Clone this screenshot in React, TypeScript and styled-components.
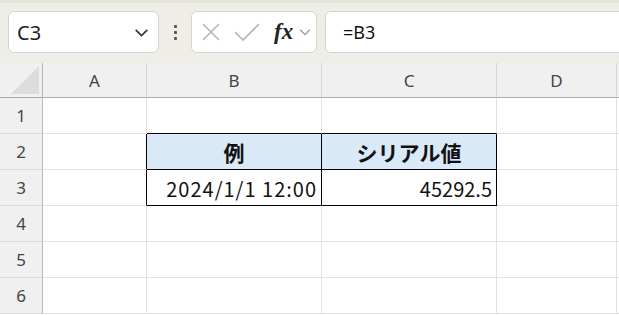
import styled, { createGlobalStyle } from "styled-components";
import { ReactElement } from "react";

const GlobalStyle = createGlobalStyle`
    html, body {
        margin: 0;
        padding: 0;
        background: #ffffff;
        overflow: hidden;
    }
    body {
        width: 619px;
        height: 315px;
        font-family: "Noto Sans", "Liberation Sans", sans-serif;
    }
`;

const COLUMNS = ["A", "B", "C", "D"];
const ROWS = [1, 2, 3, 4, 5, 6];

type CellData = {
    text?: string;
    align?: "left" | "center" | "right";
    bold?: boolean;
    fill?: string;
    right?: boolean;
    bottom?: boolean;
    wide?: boolean;
};

// B2:C3 の表 (罫線は黒)
const cellMap: Record<string, CellData> = {
    A2: { right: true },
    A3: { right: true },
    B1: { bottom: true },
    C1: { bottom: true },
    B2: { text: "例", align: "center", bold: true, fill: "#dae9f8", right: true, bottom: true },
    C2: { text: "シリアル値", align: "center", bold: true, fill: "#dae9f8", right: true, bottom: true },
    B3: { text: "2024/1/1 12:00", align: "right", right: true, bottom: true, wide: true },
    C3: { text: "45292.5", align: "right", right: true, bottom: true },
};

export default function App(): JSX.Element {
    return (
        <>
            <GlobalStyle />
            <Page>
                <Toolbar>
                    <NameBox>
                        <NameText>C3</NameText>
                        <ChevronDown size={17} color="#333" />
                    </NameBox>
                    <DotsHandle>
                        <Dot />
                        <Dot />
                        <Dot />
                    </DotsHandle>
                    <IconBox>
                        <svg width="20" height="20" viewBox="0 0 20 20">
                            <path d="M2 2 L18 18 M18 2 L2 18" stroke="#b5b5b5" strokeWidth="1.6" fill="none" />
                        </svg>
                        <svg width="26" height="20" viewBox="0 0 26 20">
                            <path d="M1 10 L9 18 L25 2" stroke="#b5b5b5" strokeWidth="1.6" fill="none" />
                        </svg>
                        <FxText>fx</FxText>
                        <ChevronDown size={14} color="#9a9a9a" />
                    </IconBox>
                    <FormulaBox>=B3</FormulaBox>
                </Toolbar>
                <Sheet>
                    <Corner>
                        <svg width="28" height="28" viewBox="0 0 28 28">
                            <polygon points="28,0 28,28 0,28" fill="#dcdcdc" />
                        </svg>
                    </Corner>
                    {COLUMNS.map((c) => (
                        <ColHeader key={c}>{c}</ColHeader>
                    ))}
                    <Filler $header />
                    {ROWS.map((r) => (
                        <RowLine key={r} row={r} />
                    ))}
                </Sheet>
            </Page>
        </>
    );
}

/*        ---------------------        COMPONENTES        ---------------------        */

interface ChevronProps {
    size: number;
    color: string;
}

const ChevronDown = ({ size, color }: ChevronProps): ReactElement => (
    <svg width={size} height={size} viewBox="0 0 16 16">
        <path d="M2.5 5.5 L8 11 L13.5 5.5" stroke={color} strokeWidth="1.5" fill="none" />
    </svg>
);

const RowLine = ({ row }: { row: number }): ReactElement => (
    <>
        <RowHeader>{row}</RowHeader>
        {COLUMNS.map((c) => {
            const d = cellMap[`${c}${row}`] ?? {};
            return (
                <Cell
                    key={c}
                    $align={d.align ?? "left"}
                    $bold={!!d.bold}
                    $fill={d.fill ?? "#ffffff"}
                    $right={!!d.right}
                    $bottom={!!d.bottom}
                    $wide={!!d.wide}
                >
                    {d.text}
                </Cell>
            );
        })}
        <Filler />
    </>
);

/*        ---------------------        ESTILOS        ---------------------        */

const Page = styled.div`
    display: flex;
    flex-direction: column;
    width: 619px;
    height: 315px;
    overflow: hidden;
`;

const Toolbar = styled.div`
    display: flex;
    align-items: flex-start;
    height: 63px;
    box-sizing: border-box;
    padding: 8px 0 0 8px;
    background: #eeeee7;
    border-top: 3px solid #e4e4dc;
`;

const WhiteBox = styled.div`
    display: flex;
    align-items: center;
    box-sizing: border-box;
    height: 42px;
    background: #ffffff;
    border: 1px solid #d6d6cf;
    border-radius: 6px;
`;

const NameBox = styled(WhiteBox)`
    width: 151px;
    padding: 0 8px 0 8px;
    justify-content: space-between;
`;

const NameText = styled.span`
    font-family: "Noto Sans", "Liberation Sans", sans-serif;
    font-size: 20px;
    color: #222;
`;

const DotsHandle = styled.div`
    display: flex;
    flex-direction: column;
    align-items: center;
    justify-content: center;
    gap: 3px;
    width: 32px;
    height: 42px;
`;

const Dot = styled.span`
    width: 3px;
    height: 3px;
    background: #555;
    border-radius: 1px;
`;

const IconBox = styled(WhiteBox)`
    width: 126px;
    padding: 0 0 0 9px;
    gap: 13px;
`;

const FxText = styled.span`
    font-family: "Liberation Serif", "DejaVu Serif", serif;
    font-style: italic;
    font-weight: bold;
    font-size: 23px;
    color: #222;
    margin-left: 1px;
    margin-right: -8px;
`;

const FormulaBox = styled(WhiteBox)`
    flex: 1;
    margin-left: 8px;
    margin-right: -10px;
    padding-left: 17px;
    font-family: "Noto Sans", "Liberation Sans", sans-serif;
    font-size: 18px;
    color: #111;
`;

const Sheet = styled.div`
    display: grid;
    grid-template-columns: 43px 104px 175px 175px 120px 2px;
    grid-template-rows: 35px repeat(6, 36px);
    background: #ffffff;
`;

const Corner = styled.div`
    display: flex;
    align-items: flex-end;
    justify-content: flex-end;
    padding: 0 3px 3px 0;
    background: #f0f0f0;
    border-right: 1px solid #b8b8b8;
    border-bottom: 1px solid #ababab;
`;

const ColHeader = styled.div`
    display: flex;
    align-items: center;
    justify-content: center;
    background: #f0f0f0;
    border-right: 1px solid #d6d6d6;
    border-bottom: 1px solid #ababab;
    font-size: 17px;
    color: #444;
`;

const RowHeader = styled.div`
    display: flex;
    align-items: center;
    justify-content: center;
    background: #f0f0f0;
    border-right: 1px solid #b8b8b8;
    border-bottom: 1px solid #dadada;
    font-size: 17px;
    color: #444;
`;

const Filler = styled.div<{ $header?: boolean }>`
    background: ${(p) => (p.$header ? "#f0f0f0" : "#ffffff")};
    border-bottom: 1px solid ${(p) => (p.$header ? "#ababab" : "#e1e1e1")};
`;

interface CellProps {
    $align: "left" | "center" | "right";
    $bold: boolean;
    $fill: string;
    $right: boolean;
    $bottom: boolean;
    $wide: boolean;
}

const Cell = styled.div<CellProps>`
    display: flex;
    align-items: center;
    justify-content: ${(p) =>
        p.$align === "center" ? "center" : p.$align === "right" ? "flex-end" : "flex-start"};
    padding: 1px 4px 0 4px;
    background: ${(p) => p.$fill};
    border-right: 1px solid ${(p) => (p.$right ? "#000000" : "#e1e1e1")};
    border-bottom: 1px solid ${(p) => (p.$bottom ? "#000000" : "#e1e1e1")};
    font-family: "Noto Sans CJK JP", "Noto Sans", sans-serif;
    font-size: ${(p) => (p.$bold ? "21px" : "20px")};
    letter-spacing: ${(p) => (p.$wide ? "1px" : "0")};
    font-weight: ${(p) => (p.$bold ? 700 : 400)};
    color: #111;
    white-space: nowrap;
    overflow: hidden;
`;
